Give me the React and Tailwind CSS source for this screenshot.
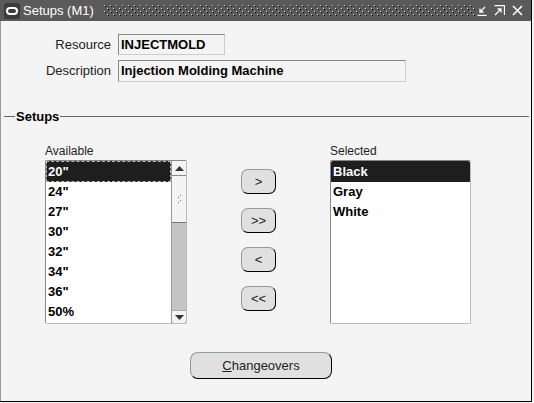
import React from 'react';

const availableItems = ['20"', '24"', '27"', '30"', '32"', '34"', '36"', '50%'];
const selectedItems = ['Black', 'Gray', 'White'];

const TitleDots = () => (
  <svg width="372" height="12" className="block">
    <defs>
      <pattern id="dots" width="6" height="6" patternUnits="userSpaceOnUse">
        <rect x="0" y="0" width="1" height="1" fill="#d8d8d8" />
        <rect x="1" y="1" width="1" height="1" fill="#111" />
        <rect x="3" y="3" width="1" height="1" fill="#d8d8d8" />
        <rect x="4" y="4" width="1" height="1" fill="#111" />
      </pattern>
    </defs>
    <rect width="372" height="12" fill="url(#dots)" />
  </svg>
);

const WinIcons = () => (
  <div className="flex items-center gap-[7px] ml-auto mr-[8px]">
    <svg width="10" height="10" viewBox="0 0 10 10">
      <path d="M8 1 L3 6 M3 2.5 V6 H6.5 M0.5 9.5 H9.5" stroke="#fff" strokeWidth="1.3" fill="none" />
    </svg>
    <svg width="11" height="11" viewBox="0 0 11 11">
      <path d="M1 10 L7 4 M3.5 4 H7 V7.5 M0.5 0.5 H10.5 V10" stroke="#fff" strokeWidth="1.3" fill="none" />
    </svg>
    <svg width="11" height="11" viewBox="0 0 11 11">
      <path d="M1 1 L10 10 M10 1 L1 10" stroke="#fff" strokeWidth="1.6" fill="none" />
    </svg>
  </div>
);

const ScrollBar = () => (
  <div className="w-[15px] h-full flex flex-col border-l border-[#999] bg-[#c4c4c4]">
    <div className="h-[15px] bg-[#f4f4f4] border-b border-[#888] flex items-center justify-center">
      <svg width="9" height="5" viewBox="0 0 9 5"><path d="M0 5 L4.5 0 L9 5 Z" fill="#333" /></svg>
    </div>
    <div className="h-[47px] bg-[#f4f4f4] border-b border-[#777] flex items-center justify-center">
      <svg width="6" height="8" viewBox="0 0 6 8">
        <rect x="4" y="0" width="1" height="1" fill="#777" />
        <rect x="2" y="2" width="1" height="1" fill="#777" />
        <rect x="4" y="5" width="1" height="1" fill="#777" />
        <rect x="2" y="7" width="1" height="1" fill="#777" />
      </svg>
    </div>
    <div className="flex-1" />
    <div className="h-[13px] bg-[#f4f4f4] border-t border-[#aaa] flex items-center justify-center rounded-b-[3px]">
      <svg width="9" height="5" viewBox="0 0 9 5"><path d="M0 0 L4.5 5 L9 0 Z" fill="#333" /></svg>
    </div>
  </div>
);

const MoveButton = ({ label }) => (
  <button className="w-[35px] h-[25px] rounded-[7px] bg-[#e0e0e0] border border-t-[#999] border-l-[#999] border-b-black border-r-black text-[13px] text-[#222] flex items-center justify-center leading-none">
    {label}
  </button>
);

export default function App() {
  return (
    <div className="w-[534px] h-[403px] bg-[#f4f4f4] font-['Liberation_Sans',Arial,sans-serif]">
      <div className="w-[532px] h-[402px] flex flex-col border-r border-b border-black">
        {/* title bar */}
        <div className="h-[21px] bg-[#5a5a5a] flex items-center shrink-0">
          <div className="ml-[4px] w-[16px] h-[16px] rounded-[2px] bg-[#3c3c3c] flex items-center justify-center">
            <div className="w-[12px] h-[8px] rounded-full border-2 border-white" />
          </div>
          <span className="ml-[3px] text-[13px] text-white leading-none">Setups (M1)</span>
          <div className="ml-[10px]">
            <TitleDots />
          </div>
          <WinIcons />
        </div>

        {/* body */}
        <div className="flex-1 flex flex-col border-l border-[#999] text-[#222]">
          <div className="flex items-center mt-[13px] h-[21px]">
            <div className="w-[110px] text-right text-[13px]">Resource</div>
            <div className="ml-[7px] w-[107px] h-[21px] border border-t-[#888] border-l-[#888] border-b-[#ccc] border-r-[#ccc] px-[2px] flex items-center text-[13px] font-bold text-black">
              INJECTMOLD
            </div>
          </div>
          <div className="flex items-center mt-[5px] h-[22px]">
            <div className="w-[110px] text-right text-[13px]">Description</div>
            <div className="ml-[7px] w-[288px] h-[22px] border border-t-[#888] border-l-[#888] border-b-[#ccc] border-r-[#ccc] px-[2px] flex items-center text-[13px] font-bold text-black">
              Injection Molding Machine
            </div>
          </div>

          {/* section header */}
          <div className="flex items-center mt-[26px] h-[16px]">
            <div className="ml-[3px] w-[11px] h-px bg-[#666]" />
            <span className="px-[1px] text-[13px] font-bold text-black leading-none">Setups</span>
            <div className="flex-1 h-px bg-[#666] mr-[2px]" />
          </div>

          {/* shuttle */}
          <div className="flex mt-[20px] pl-[44px]">
            <div className="flex flex-col">
              <div className="text-[12px] h-[15px] leading-[15px]">Available</div>
              <div className="mt-[1px] w-[142px] h-[164px] border border-t-[#888] border-l-[#888] border-b-[#bbb] border-r-[#bbb] rounded-[2px] bg-white flex">
                <div className="flex-1 flex flex-col">
                  {availableItems.map((item, i) => (
                    <div
                      key={item}
                      className={
                        i === 0
                          ? 'h-[21px] bg-[#1e1e1e] text-white border border-dashed border-white/70 px-[1px] flex items-center text-[13px] font-bold'
                          : 'h-[20px] px-[2px] flex items-center text-[13px] font-bold text-black'
                      }
                    >
                      {item}
                    </div>
                  ))}
                </div>
                <ScrollBar />
              </div>
            </div>

            <div className="ml-[54px] pt-[25px] flex flex-col gap-[14px]">
              <MoveButton label=">" />
              <MoveButton label=">>" />
              <MoveButton label="<" />
              <MoveButton label="<<" />
            </div>

            <div className="ml-[54px] flex flex-col">
              <div className="text-[12px] h-[15px] leading-[15px]">Selected</div>
              <div className="mt-[1px] w-[141px] h-[164px] border border-t-[#888] border-l-[#888] border-b-[#bbb] border-r-[#bbb] rounded-[2px] bg-white flex flex-col">
                {selectedItems.map((item, i) => (
                  <div
                    key={item}
                    className={
                      i === 0
                        ? 'h-[21px] bg-[#1e1e1e] text-white px-[2px] flex items-center text-[13px] font-bold rounded-t-[2px]'
                        : 'h-[20px] px-[2px] flex items-center text-[13px] font-bold text-black'
                    }
                  >
                    {item}
                  </div>
                ))}
              </div>
            </div>
          </div>

          <div className="mt-[28px] ml-[189px]">
            <button className="w-[142px] h-[27px] rounded-[8px] bg-[#e0e0e0] border border-t-[#999] border-l-[#999] border-b-black border-r-black text-[13px] text-[#222] flex items-center justify-center">
              <span><span className="underline">C</span>hangeovers</span>
            </button>
          </div>
        </div>
      </div>
    </div>
  );
}
